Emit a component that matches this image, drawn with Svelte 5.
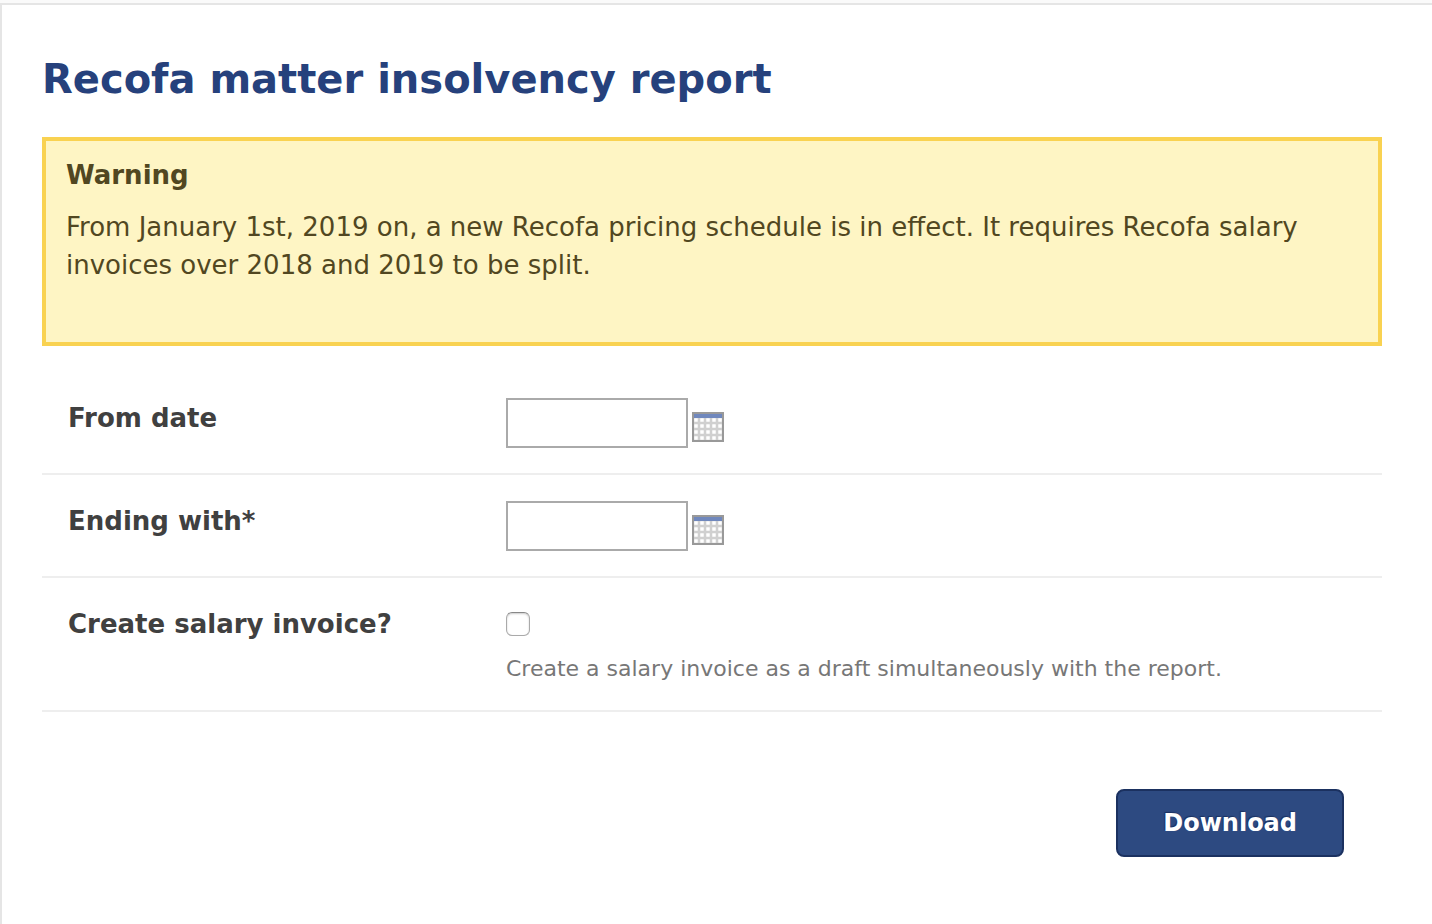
<script>
  let fromDate = $state('');
  let endDate = $state('');
  let createInvoice = $state(false);
</script>

{#snippet calendar()}
  <svg width="32" height="30" viewBox="0 0 32 30" aria-hidden="true">
    <rect width="32" height="30" fill="#999" />
    <rect x="2" y="2" width="28" height="4" fill="#7088bd" />
    <rect x="2" y="6" width="28" height="22" fill="#d0d0d0" />
    {#each [6, 12, 18, 24] as y}
      {#each [2, 8, 14, 20, 26] as x}
        <rect {x} {y} width="4" height="4" fill="#e8e8e8" />
        <rect x={x + 0.5} y={y + 0.5} width="3" height="3" rx="1" fill="#fff" />
      {/each}
    {/each}
  </svg>
{/snippet}

<main class="panel">
  <h1>Recofa matter insolvency report</h1>

  <section class="warning">
    <h2>Warning</h2>
    <p>
      From January 1st, 2019 on, a new Recofa pricing schedule is in effect. It requires Recofa salary
      invoices over 2018 and 2019 to be split.
    </p>
  </section>

  <form onsubmit={(e) => e.preventDefault()}>
    <div class="row">
      <label for="from-date">From date</label>
      <div class="date">
        <input id="from-date" type="text" bind:value={fromDate} />
        <button type="button" class="picker" aria-label="Pick from date">{@render calendar()}</button>
      </div>
    </div>

    <div class="row">
      <label for="end-date">Ending with*</label>
      <div class="date">
        <input id="end-date" type="text" required bind:value={endDate} />
        <button type="button" class="picker" aria-label="Pick ending date">{@render calendar()}</button>
      </div>
    </div>

    <div class="row">
      <label for="create-invoice">Create salary invoice?</label>
      <div class="option">
        <input id="create-invoice" type="checkbox" aria-describedby="invoice-help" bind:checked={createInvoice} />
        <p id="invoice-help">Create a salary invoice as a draft simultaneously with the report.</p>
      </div>
    </div>

    <div class="actions">
      <button type="submit" class="download">Download</button>
    </div>
  </form>
</main>

<style>
  :global(body) {
    background: #fafafa;
  }

  .panel {
    box-sizing: border-box;
    min-height: calc(100vh - 3px);
    margin-top: 3px;
    padding: 48px 50px 40px 40px;
    border-top: 2px solid #e5e5e5;
    border-left: 2px solid #e5e5e5;
    background: #fff;
    color: #404040;
    font: 26px/38px Verdana, 'DejaVu Sans', sans-serif;
  }

  h1 {
    margin: 0 0 32px;
    color: #26417c;
    font-size: 40px;
    line-height: 52px;
  }

  .warning {
    padding: 16px 20px 58px;
    border: 4px solid #f9d251;
    background: #fef5c4;
    color: #514721;
  }

  .warning h2 {
    margin: 0 0 15px;
    font-size: 26px;
    line-height: 36px;
  }

  .warning p {
    margin: 0;
  }

  form {
    padding-top: 26px;
  }

  .row {
    display: grid;
    grid-template-columns: 438px 1fr;
    padding: 26px 26px 25px;
    border-bottom: 2px solid #eee;
  }

  .row label {
    padding-top: 1px;
    font-weight: bold;
  }

  .date {
    display: flex;
    align-items: flex-end;
    gap: 4px;
  }

  .date input {
    box-sizing: border-box;
    width: 182px;
    height: 50px;
    margin: 0;
    padding: 4px 8px;
    border: 2px solid #aaa;
    border-radius: 0;
    font: inherit;
  }

  .picker {
    display: flex;
    margin-bottom: 6px;
    padding: 0;
    border: 0;
    background: none;
    cursor: pointer;
  }

  .option {
    padding-top: 8px;
  }

  .option input {
    display: block;
    appearance: none;
    width: 24px;
    height: 24px;
    margin: 0 0 17px;
    border: 1px solid #aaa;
    border-top-color: #888;
    border-radius: 6px;
    background: #fff;
    box-shadow: inset 0 1px 2px #ccc;
  }

  .option input:checked {
    background: #26417c;
  }

  .option p {
    margin: 0;
    color: #777;
    font-size: 22px;
    line-height: 32px;
  }

  .actions {
    display: flex;
    justify-content: flex-end;
    padding: 77px 38px 0;
  }

  .download {
    height: 68px;
    padding: 0 45px;
    border: 2px solid #1b3160;
    border-radius: 8px;
    background: #2d4a81;
    color: #fff;
    font: bold 24px/32px Verdana, 'DejaVu Sans', sans-serif;
    text-shadow: -1px -1px 1px #1b3160;
    cursor: pointer;
  }
</style>
